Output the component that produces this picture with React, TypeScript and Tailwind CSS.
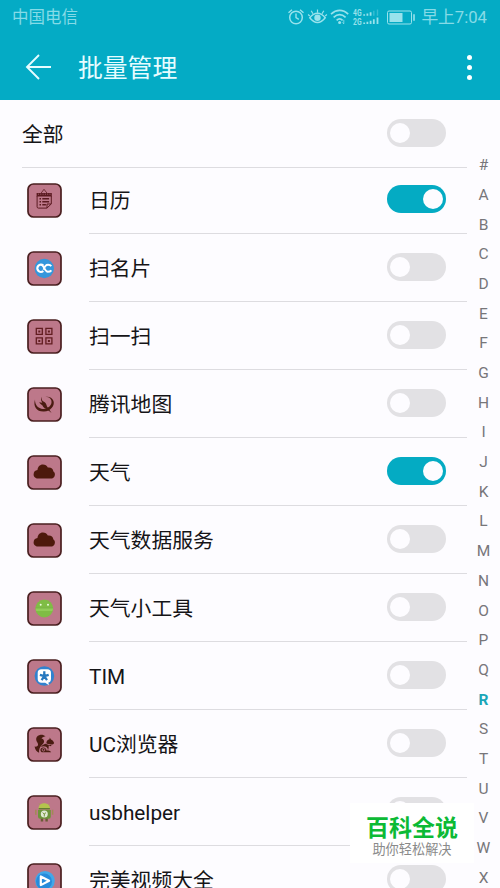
import { useState } from "react";
import type { ReactNode } from "react";

type AppItem = {
    id: string;
    name: string;
    enabled: boolean;
    icon: ReactNode;
};

const dark = "#4a1c12";

const CalendarIcon = () => (
    <g fill="none" stroke="#5a1a20" strokeWidth="1">
        <path d="M13.800 10.500 17 6.300l3.300 4.200" strokeWidth="0.800" />
        <path d="M9.600 10h15.200v3.500H9.600z" fill="#5a1a20" stroke="none" />
        <path d="M11 11.200h12.500" stroke="#c07a8e" strokeWidth="0.700" strokeDasharray="1 1.300" />
        <path d="M10.100 13v10.800q0 1.300 1.300 1.300h8.600l4.300-4.200V13M20 25v-4h4.200" />
        <path d="M12.500 15.800h1.500M12.500 18.800h1.500M12.500 21.800h1.500" strokeWidth="1.600" />
        <path d="M15.300 15.800h6.800M15.300 18.800h6.800M15.300 21.800h3.600" strokeWidth="1.500" />
    </g>
);

const CardScanIcon = () => (
    <g>
        <circle cx="17.300" cy="17.500" r="9.700" fill="#3497dc" />
        <g fill="none" stroke="#fff" strokeWidth="2.200">
            <path d="M16.300 14.600a3.600 3.600 0 1 0 0 5.400" />
            <path d="M14.200 13.900c3 0 3.200 6.900 6.600 6.900 1.600 0 2.700-.4 3.600-1.500M16.600 18.800c.8-3 2.200-5 4.500-5 1.400 0 2.400.4 3.200 1.400" strokeWidth="1.900" />
        </g>
    </g>
);

const QrIcon = () => (
    <g fill="none" stroke="#621d20" strokeWidth="1.300">
        <path d="M9.300 9.400h6v6h-6zM18.900 9.400h6v6h-6zM9.300 18.900h6v6h-6zM18.900 18.900h6v6h-6z" />
        <path d="M11.300 12.400h2M20.900 12.400h2M11.300 21.900h2M20.900 21.900h2" strokeWidth="2" />
    </g>
);

const MapIcon = () => (
    <g fill={dark}>
        <path d="M8 12.500C5.800 19.500 9.800 25 17 24.600c6.800-.4 11-6 9.500-10.600-1-3.300-4.600-4.800-8-4.200 4.200.3 6.400 2.600 6 5.800-.5 4-4.500 6.500-8.500 6.300-4.800-.2-8.200-4-8-9.400z" />
        <path d="M14.500 9.800c-.2 3 .8 4.300 2.900 5.100 1.800 1.300 2.200 3 2.600 4.600l4.600 6.500-5.400-4.200c-1.800-.7-3.300-1.500-3.700-3.200-1.300-1-2.500-1.800-3.300-3.300 1.300.3 2.300.4 3.100.4-1.100-1.700-1.900-3.600-.8-5.900z" />
    </g>
);

const CloudIcon = () => (
    <path
        d="M12 23.600C8.800 23.600 6.600 22 6.600 19.400c0-2.400 1.500-4 3.900-4.300.1-3.400 2.300-5.700 5.400-5.700 2.200 0 4.100 1.200 4.900 3.100 3-.5 5.300 1.100 5.600 3.900 1 .7 1.500 1.700 1.500 3 0 2.600-1.700 4.200-4.700 4.200z"
        fill="#4d190c"
    />
);

const RobotIcon = () => (
    <g>
        <path d="m12.200 8.800 2 3M22.400 8.800l-2 3" stroke="#9ba855" strokeWidth="0.800" />
        <circle cx="17.300" cy="17.500" r="8.900" fill="#7fbd45" />
        <path d="M8.500 16.800h17.600c0 1.500-.3 2.200-.7 3.100H9.200z" fill="#91cd58" />
        <path d="M8.600 17h17.400" stroke="#6da53d" strokeWidth="0.600" />
        <circle cx="13.700" cy="13.800" r="1" fill="#eaffdd" />
        <circle cx="21" cy="13.800" r="1" fill="#eaffdd" />
    </g>
);

const TimIcon = () => (
    <g>
        <circle cx="17.400" cy="17" r="9.800" fill="#3182ce" />
        <path d="M14.500 10.300h5.700c2.500 0 3.800 1.300 3.800 3.700v5.800c0 2.400-1 3.700-2.600 3.800l.5 2.700-3.700-2.500h-3.700c-2.500 0-3.800-1.300-3.800-3.700V14c0-2.400 1.300-3.700 3.800-3.700z" fill="#fff" />
        <path d="M17.300 12.300v4.900M17.300 17.200l-4.400-1.400M17.300 17.200l4.400-1.400M17.300 17.200l-2.700 3.900M17.300 17.200l2.700 3.900" stroke="#2678bf" strokeWidth="2.300" fill="none" />
    </g>
);

const SquirrelIcon = () => (
    <g fill={dark}>
        {/* tail */}
        <path d="M18.600 9.600C17 7.900 14.800 7.400 12.800 7.900 9.900 8.600 8.700 11 9.300 13.300c.5 2.100 2.200 3.200 1.700 4.800-.4 1.400-1.700 1.800-3.400 1.500.4 3 2 5.400 4.500 6.200-.4-3.500.7-5.800 2.600-7.600 1.700-1.600 2.800-2.900 2.200-4.700-.4-1.200-1.400-1.800-2.400-2 1.100-1.300 2.500-1.900 4.100-1.900z" />
        {/* head */}
        <path d="M19.300 16.300c.2-2.200 1.300-3.600 3.200-4l.3-1.900 1.100 2c1.600.6 2.600 1.800 3.200 3.500-.4 1.100-1.700 1.600-3.300 1.500-1.600 0-3.200-.2-4.500-1.100z" />
        {/* body and haunch */}
        <path d="M18.700 16.700c-2 .5-4 1.500-4.600 3.200 2.600-1.400 5.500-.6 6.500 1.700.4 1 .3 1.800 0 2.500.7-1 1.300-3.600 1.100-5.600l2.300.8.500-1.200c-2.200-.2-4.400-.4-5.800-1.400z" />
        <path d="M14.800 25.300c-2-1.300-1.900-4.300 1.200-4.700 2.100-.2 3.600 1.200 3.400 3 1.900-.4 4 .1 4.800 1.700z" />
        <circle cx="16.500" cy="22.800" r="1.300" fill="none" stroke="#bd788a" strokeWidth="0.800" />
    </g>
);

const UsbIcon = () => (
    <g>
        <path d="M8.800 14.700v5M25.600 14.700v5" stroke="#a18b54" strokeWidth="1.500" />
        <path d="M15 23v3.500M19.600 23v3.500" stroke="#6a5b35" strokeWidth="2.400" />
        <path d="M12 8.200l1.500 2.300M22.500 8.200 21 10.500" stroke="#a39c55" strokeWidth="0.700" />
        <path d="M11 15h12.800v6.800q0 2-2 2H13q-2 0-2-2z" fill="#6c943a" />
        <path d="M11.500 14.200c-.2-4 2.300-6 5.700-6s6 2 5.900 6z" fill="#b4c44d" />
        <path d="M11.700 13h11.200v1.400H11.700z" fill="#607d31" />
        <circle cx="17.300" cy="18.900" r="3.500" fill="#e0ead4" />
        <path d="m15.600 17.600 1.700 1.500 1.700-1.500M17.300 18.500v3" stroke="#76943c" strokeWidth="1" fill="none" />
    </g>
);

const VideoIcon = () => (
    <g>
        <circle cx="18" cy="17.800" r="9.800" fill="#43a7e8" />
        <circle cx="17" cy="18.500" r="8" fill="#278bdb" />
        <path d="M13.800 13.500v8.600l8.300-4.400z" fill="none" stroke="#fff" strokeWidth="2.200" strokeLinejoin="round" />
    </g>
);

const initialApps: AppItem[] = [
    { id: "calendar", name: "日历", enabled: true, icon: <CalendarIcon /> },
    { id: "card", name: "扫名片", enabled: false, icon: <CardScanIcon /> },
    { id: "scan", name: "扫一扫", enabled: false, icon: <QrIcon /> },
    { id: "map", name: "腾讯地图", enabled: false, icon: <MapIcon /> },
    { id: "weather", name: "天气", enabled: true, icon: <CloudIcon /> },
    { id: "weather-data", name: "天气数据服务", enabled: false, icon: <CloudIcon /> },
    { id: "weather-widget", name: "天气小工具", enabled: false, icon: <RobotIcon /> },
    { id: "tim", name: "TIM", enabled: false, icon: <TimIcon /> },
    { id: "uc", name: "UC浏览器", enabled: false, icon: <SquirrelIcon /> },
    { id: "usb", name: "usbhelper", enabled: false, icon: <UsbIcon /> },
    { id: "video", name: "完美视频大全", enabled: false, icon: <VideoIcon /> },
];

const letters = "#ABCDEFGHIJKLMNOPQRSTUVWX".split("");

function Toggle({ on, onClick }: { on: boolean; onClick: () => void }) {
    return (
        <button
            role="switch"
            aria-checked={on}
            onClick={onClick}
            className={
                on
                    ? "mb-0.5 flex h-7 w-[59px] shrink-0 items-center justify-end rounded-full bg-[#04abc3] px-[3px]"
                    : "mb-0.5 flex h-7 w-[59px] shrink-0 items-center rounded-full bg-[#e2e1e4] px-[3px]"
            }
        >
            <span className="size-5 rounded-full bg-[#fdfcff]" />
        </button>
    );
}

function StatusBar() {
    return (
        <div className="flex h-[34px] items-center pl-3 pr-[13px] text-[16.500px] leading-none text-[#86dbe7]">
            <span className="flex-1 pt-[3px]">中国电信</span>
            <svg width="134" height="20" viewBox="0 0 134 20" className="mr-px" fill="none" stroke="#98e2ec" strokeWidth="1.500">
                {/* alarm */}
                <circle cx="10" cy="10.500" r="6.300" />
                <path d="M10 6.500v4.200l2.800 1.700M2.500 5.700 6 2.700M17.500 5.700 14 2.700" strokeWidth="1.400" />
                {/* eye comfort */}
                <path d="M23.800 10.800c4.800-6 10.600-6 15.400 0-4.800 6.300-10.600 6.300-15.400 0z" />
                <circle cx="31.500" cy="10.800" r="3.200" fill="#98e2ec" stroke="none" />
                <path d="M31.500 5.800V2.500M27 6.700l-1.800-3M36 6.700l1.800-3M23.800 9l-1.700-1.500M39.200 9l1.700-1.500" strokeWidth="1.200" />
                {/* wifi */}
                <path d="M45 7.100c5.400-4.900 12-4.900 17.200 0M47.600 10.300c3.800-3.400 8.200-3.400 12 0M50.600 13.300c2-1.800 4-1.800 6 0" strokeWidth="1.700" />
                <circle cx="53.600" cy="15.500" r="1.500" fill="#98e2ec" stroke="none" />
                <path d="m57.800 12.800v4M56.500 15.400l1.300 1.500" strokeWidth="0.800" />
                <g fill="#98e2ec" stroke="none" fontFamily="Roboto, sans-serif" fontWeight="700" fontSize="9">
                    <text x="67" y="8.800" textLength="8.500" lengthAdjust="spacingAndGlyphs">4G</text>
                    <text x="67" y="17.500" textLength="8.500" lengthAdjust="spacingAndGlyphs">2G</text>
                </g>
                <path d="M78.200 8.800V7.300M81.400 8.800V6.500M84.600 8.800V5.300" strokeWidth="1.800" />
                <path d="M87.800 8.800V3.800M91.500 8.800V2.500" strokeWidth="1.400" opacity="0.350" />
                <path d="M78.200 17v-1.500M81.400 17v-2.200M84.600 17v-3.300M87.800 17v-4.700M91.500 17v-6.500" strokeWidth="1.800" />
                {/* battery */}
                <rect x="101.500" y="4" width="24" height="13" rx="1.500" strokeWidth="1" />
                <rect x="103.500" y="6" width="13" height="9" fill="#98e2ec" stroke="none" />
                <path d="M128 7.300v6.500" strokeWidth="1.600" />
            </svg>
            <span className="whitespace-nowrap pt-[3px] text-[16.700px]">早上7:04</span>
        </div>
    );
}

export default function App() {
    const [apps, setApps] = useState<AppItem[]>(initialApps);
    const allOn = apps.every(a => a.enabled);

    const toggleApp = (id: string) => {
        setApps(apps.map(a => (a.id === id ? { ...a, enabled: !a.enabled } : a)));
    };

    return (
        <div className="relative flex h-[888px] w-[500px] flex-col overflow-hidden bg-[#fdfcff] font-[Roboto,'Noto_Sans_CJK_SC',sans-serif] text-[#151417]">
            <header className="h-[100px] shrink-0 bg-[#04abc5]">
                <StatusBar />
                <div className="flex h-[66px] items-center pl-[25px] pr-[28px] text-[#e6fcff]">
                    <svg width="27" height="26" viewBox="0 0 27 26" fill="none" stroke="currentColor" strokeWidth="1.900">
                        <path d="M26 13H2M14 1 2 13l12 12" />
                    </svg>
                    <h1 className="ml-[26px] flex-1 pt-[5px] text-[24.800px] leading-none">批量管理</h1>
                    <div className="flex flex-col gap-[5px]">
                        <span className="size-[5px] rounded-full bg-white" />
                        <span className="size-[5px] rounded-full bg-white" />
                        <span className="size-[5px] rounded-full bg-white" />
                    </div>
                </div>
            </header>

            <div className="flex min-h-0 flex-1">
                <main className="w-[467px] pl-[22px] text-[20.800px] leading-7">
                    <div className="flex h-[68px] items-center border-b border-[#dddce0] pr-[21px]">
                        <span className="flex-1 pt-0.5">全部</span>
                        <Toggle
                            on={allOn}
                            onClick={() => setApps(apps.map(a => ({ ...a, enabled: !allOn })))}
                        />
                    </div>
                    {apps.map(app => (
                        <div key={app.id} className="group flex h-[68px] pl-[5px] nth-[2]:h-[66px]">
                            <svg width="35" height="35" viewBox="0 0 35 35" className="mt-[17px] shrink-0 self-start group-nth-[2]:mt-[15px]">
                                <rect x="1" y="1" width="33" height="33" rx="5.500" fill="#bd788a" stroke="#4a1f20" strokeWidth="1.700" />
                                {app.icon}
                            </svg>
                            <div className="ml-[27px] flex flex-1 items-center border-b border-[#dddce0] pr-[21px] group-nth-[2]:pb-0.5">
                                <span className="flex-1 pt-0.5">{app.name}</span>
                                <Toggle on={app.enabled} onClick={() => toggleApp(app.id)} />
                            </div>
                        </div>
                    ))}
                </main>
                <nav className="flex w-[33px] flex-col items-center pt-[51px] text-[15.500px] text-[#77767a]">
                    {letters.map(l => (
                        <span
                            key={l}
                            className={
                                l === "R"
                                    ? "flex h-[29.700px] shrink-0 items-center font-bold text-[#1aa6b8]"
                                    : "flex h-[29.700px] shrink-0 items-center"
                            }
                        >
                            {l}
                        </span>
                    ))}
                </nav>
            </div>

            <div className="absolute left-[350px] top-[803px] flex h-[60px] w-[124px] flex-col items-center bg-white pt-[14px]">
                <span className="text-[23px] font-bold leading-[24px] text-[#0cba35]">百科全说</span>
                <span className="text-[13.200px] leading-[18px] text-[#8a8a8a]">助你轻松解决</span>
            </div>
        </div>
    );
}
